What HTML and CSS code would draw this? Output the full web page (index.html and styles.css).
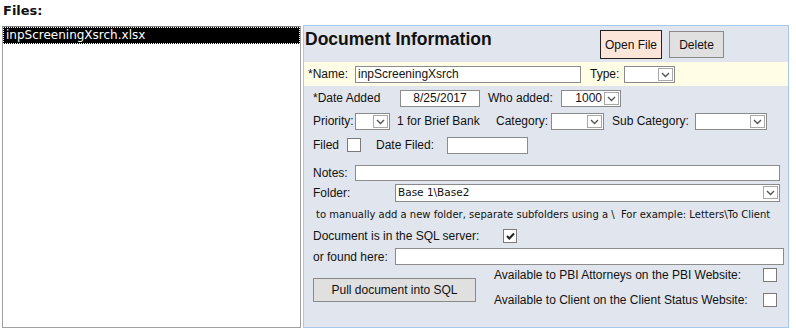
FILE: index.html
```html
<!DOCTYPE html>
<html>
<head>
<meta charset="utf-8">
<link rel="stylesheet" href="styles.css">
</head>
<body>
<div class="files-label">Files:</div>
<div class="main">
  <div class="listbox">
    <div class="list-item selected">inpScreeningXsrch.xlsx</div>
  </div>
  <div class="panel">
    <div class="row header">
      <div class="title">Document Information</div>
      <div class="btn open">Open File</div>
      <div class="btn delete">Delete</div>
    </div>
    <div class="row name-row">
      <span class="lbl w-name">*Name:</span>
      <div class="input w-nameinput">inpScreeningXsrch</div>
      <span class="lbl w-type">Type:</span>
      <div class="select w-typesel"><div class="val"></div><div class="arrow"><svg width="9" height="6" viewBox="0 0 9 6"><path d="M1 1 L4.5 4.5 L8 1" fill="none" stroke="#555" stroke-width="1.4"/></svg></div></div>
    </div>
    <div class="row date-row">
      <span class="lbl w-date">*Date Added</span>
      <div class="input w-dateinput center">8/25/2017</div>
      <span class="lbl w-who">Who added:</span>
      <div class="select w-whosel"><div class="val right">1000</div><div class="arrow"><svg width="9" height="6" viewBox="0 0 9 6"><path d="M1 1 L4.5 4.5 L8 1" fill="none" stroke="#555" stroke-width="1.4"/></svg></div></div>
    </div>
    <div class="row pri-row">
      <span class="lbl w-pri">Priority:</span>
      <div class="select w-prisel"><div class="val"></div><div class="arrow"><svg width="9" height="6" viewBox="0 0 9 6"><path d="M1 1 L4.5 4.5 L8 1" fill="none" stroke="#555" stroke-width="1.4"/></svg></div></div>
      <span class="lbl w-brief">1 for Brief Bank</span>
      <span class="lbl w-cat">Category:</span>
      <div class="select w-catsel"><div class="val"></div><div class="arrow"><svg width="9" height="6" viewBox="0 0 9 6"><path d="M1 1 L4.5 4.5 L8 1" fill="none" stroke="#555" stroke-width="1.4"/></svg></div></div>
      <span class="lbl w-sub">Sub Category:</span>
      <div class="select w-subsel"><div class="val"></div><div class="arrow"><svg width="9" height="6" viewBox="0 0 9 6"><path d="M1 1 L4.5 4.5 L8 1" fill="none" stroke="#555" stroke-width="1.4"/></svg></div></div>
    </div>
    <div class="row filed-row">
      <span class="lbl w-filed">Filed</span>
      <div class="check"></div>
      <span class="lbl w-datefiled">Date Filed:</span>
      <div class="input w-datefiledinput"></div>
    </div>
    <div class="row notes-row">
      <span class="lbl w-notes">Notes:</span>
      <div class="input w-notesinput"></div>
    </div>
    <div class="row folder-row">
      <span class="lbl w-folder">Folder:</span>
      <div class="select w-foldersel"><div class="val tahoma">Base 1\Base2</div><div class="arrow"><svg width="9" height="6" viewBox="0 0 9 6"><path d="M1 1 L4.5 4.5 L8 1" fill="none" stroke="#555" stroke-width="1.4"/></svg></div></div>
    </div>
    <div class="row note-row">
      <span class="note">to manually add a new folder, separate subfolders using a \&nbsp; For example: Letters\To Client</span>
    </div>
    <div class="row sql-row">
      <span class="lbl w-sql">Document is in the SQL server:</span>
      <div class="check checked"><svg width="11" height="11" viewBox="0 0 11 11"><path d="M2 5 L4.3 7.5 L9 2.5" fill="none" stroke="#222" stroke-width="2"/></svg></div>
    </div>
    <div class="row found-row">
      <span class="lbl w-found">or found here:</span>
      <div class="input w-foundinput"></div>
    </div>
    <div class="bottom">
      <div class="btn pull">Pull document into SQL</div>
      <div class="avail">
        <div class="avail-row"><span class="lbl w-avail">Available to PBI Attorneys on the PBI Website:</span><div class="check"></div></div>
        <div class="avail-row"><span class="lbl w-avail">Available to Client on the Client Status Website:</span><div class="check"></div></div>
      </div>
    </div>
  </div>
</div>
</body>
</html>
```
FILE: styles.css
```css
* { box-sizing: border-box; }
body {
  margin: 0;
  font-family: "Liberation Sans", Arial, sans-serif;
  font-size: 12px;
  color: #111;
  background: #fff;
}
.files-label {
  font-family: "DejaVu Sans", sans-serif;
  font-weight: bold;
  font-size: 13px;
  height: 25px;
  padding: 3px 0 0 3px;
  line-height: 16px;
}
.main {
  display: flex;
  padding-left: 2px;
}
.listbox {
  width: 299px;
  height: 302px;
  margin-top: 1px;
  border: 1px solid #a0a0a0;
  border-top-color: #808080;
  background: #fff;
}
.list-item {
  font-family: "DejaVu Sans", sans-serif;
  font-size: 12px;
  height: 17px;
  line-height: 15px;
  padding-left: 2px;
}
.list-item.selected {
  background: #000;
  color: #fff;
  border: 1px dotted #fff;
}
.panel {
  margin-left: 2px;
  width: 486px;
  height: 303px;
  background: #e1e6ee;
  border: 1px solid #a7c8ea;
  display: flex;
  flex-direction: column;
}
.row {
  display: flex;
  align-items: center;
  padding-left: 9px;
}
.lbl { white-space: nowrap; flex: none; }
.header {
  height: 36px;
  align-items: flex-start;
  padding-left: 1px;
}
.title {
  width: 295px;
  font-size: 17.5px;
  font-weight: bold;
  margin-top: 2px;
  line-height: 22px;
}
.btn {
  display: flex;
  align-items: center;
  justify-content: center;
  font-size: 12px;
  flex: none;
}
.btn.open {
  width: 62px;
  height: 29px;
  margin-top: 4px;
  background: #fce5d9;
  border: 1px solid #222;
}
.btn.delete {
  width: 55px;
  height: 27px;
  margin-top: 5px;
  margin-left: 7px;
  background: #e0e0e0;
  border: 1px solid #8a8a8a;
}
.name-row {
  height: 24px;
  background: #fffde5;
  padding-left: 4px;
}
.input {
  background: #fff;
  border: 1px solid #8c8c8c;
  height: 17px;
  line-height: 15px;
  padding-left: 2px;
  flex: none;
  white-space: nowrap;
}
.input.center { text-align: center; padding-left: 0; }
.select {
  display: flex;
  background: #fff;
  border: 1px solid #8a8a8a;
  height: 17px;
  flex: none;
}
.select .val {
  flex: 1;
  line-height: 15px;
  padding-left: 2px;
}
.select .val.right { text-align: right; padding-right: 1px; }
.select .arrow {
  width: 15px;
  height: 13px;
  margin: 1px;
  border: 1px solid #a8a8a8;
  background: #fff;
  display: flex;
  align-items: center;
  justify-content: center;
  padding-top: 2px;
}
.tahoma { font-family: "DejaVu Sans", sans-serif; font-size: 10.5px; }

.w-name { width: 47px; }
.w-nameinput { width: 226px; }
.w-type { width: 34px; margin-left: 9px; }
.w-typesel { width: 51px; }

.date-row { height: 24px; }
.w-date { width: 87px; }
.w-dateinput { width: 80px; }
.w-who { width: 73px; margin-left: 8px; }
.w-whosel { width: 60px; }

.pri-row { height: 22px; }
.w-pri { width: 42px; }
.w-prisel { width: 35px; }
.w-brief { width: 99px; margin-left: 7px; }
.w-cat { width: 55px; }
.w-catsel { width: 53px; }
.w-sub { width: 83px; margin-left: 8px; }
.w-subsel { width: 72px; }

.filed-row { height: 26px; }
.w-filed { width: 34px; }
.check {
  width: 14px;
  height: 14px;
  background: #fff;
  border: 1px solid #7a7a7a;
  flex: none;
  display: flex;
  align-items: center;
  justify-content: center;
}
.w-datefiled { width: 71px; margin-left: 15px; }
.w-datefiledinput { width: 81px; }

.notes-row { height: 21px; margin-top: 4px; }
.w-notes { width: 42px; }
.w-notesinput { width: 425px; height: 16px; }

.folder-row { height: 19px; }
.w-folder { width: 82px; }
.w-foldersel { width: 385px; height: 18px; }

.note-row { height: 24px; padding-left: 12px; }
.note {
  font-family: "DejaVu Sans", sans-serif;
  font-size: 10px;
  white-space: nowrap;
}

.sql-row { height: 20px; }
.w-sql { width: 190px; }

.found-row { height: 21px; }
.w-found { width: 82px; }
.w-foundinput { width: 389px; }

.bottom {
  display: flex;
  padding-left: 9px;
}
.btn.pull {
  width: 163px;
  height: 24px;
  margin-top: 11px;
  background: #e0e0e0;
  border: 1px solid #8a8a8a;
}
.avail {
  margin-left: 18px;
  display: flex;
  flex-direction: column;
  gap: 9px;
}
.avail-row {
  display: flex;
  align-items: center;
  height: 16px;
}
.w-avail { width: 269px; }
```
